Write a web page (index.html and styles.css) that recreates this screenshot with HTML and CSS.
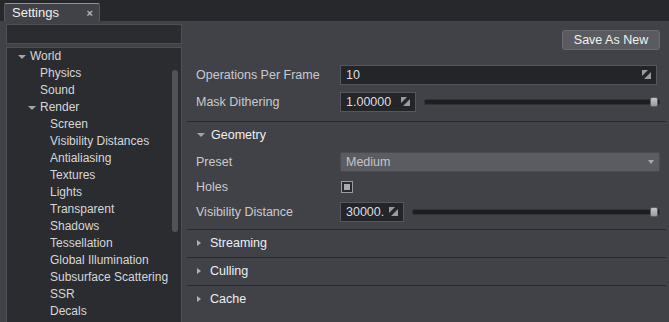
FILE: index.html
```html
<!DOCTYPE html>
<html lang="en">
<head>
    <meta charset="UTF-8">
    <title>Settings</title>
    <link rel="stylesheet" href="styles.css">
</head>
<body>

    <div class="tab-bar">
        <div class="tab">
            <span class="tab-title">Settings</span>
            <span class="tab-close">×</span>
        </div>
    </div>

    <div class="main">

        <!-- Arbol lateral -->
        <div class="side">
            <div class="search"></div>
            <div class="tree">
                <div class="node lvl0"><span class="arrow-down"></span>World</div>
                <div class="node lvl1">Physics</div>
                <div class="node lvl1">Sound</div>
                <div class="node lvl1b"><span class="arrow-down"></span>Render</div>
                <div class="node lvl2">Screen</div>
                <div class="node lvl2">Visibility Distances</div>
                <div class="node lvl2">Antialiasing</div>
                <div class="node lvl2">Textures</div>
                <div class="node lvl2">Lights</div>
                <div class="node lvl2">Transparent</div>
                <div class="node lvl2">Shadows</div>
                <div class="node lvl2">Tessellation</div>
                <div class="node lvl2">Global Illumination</div>
                <div class="node lvl2">Subsurface Scattering</div>
                <div class="node lvl2">SSR</div>
                <div class="node lvl2">Decals</div>
                <div class="scroll-thumb"></div>
            </div>
        </div>

        <!-- Panel de propiedades -->
        <div class="content">
            <div class="toolbar">
                <button class="btn">Save As New</button>
            </div>

            <div class="group">
                <div class="row tall">
                    <span class="label">Operations Per Frame</span>
                    <div class="field">
                        <div class="input wide"><span>10</span><svg class="resize" width="9" height="9" viewBox="0 0 9 9"><path d="M0 0H6L0 6Z M9 9H2L9 2Z" fill="#9a9b9f"/></svg></div>
                    </div>
                </div>
                <div class="row tall">
                    <span class="label">Mask Dithering</span>
                    <div class="field">
                        <div class="input num"><span>1.00000</span><svg class="resize" width="9" height="9" viewBox="0 0 9 9"><path d="M0 0H6L0 6Z M9 9H2L9 2Z" fill="#9a9b9f"/></svg></div>
                        <div class="slider"><div class="track"></div><div class="thumb"></div></div>
                    </div>
                </div>
            </div>

            <div class="section">
                <div class="section-head"><span class="arrow-down"></span>Geometry</div>
                <div class="section-body">
                    <div class="row">
                        <span class="label">Preset</span>
                        <div class="field">
                            <div class="select"><span>Medium</span><span class="select-arrow"></span></div>
                        </div>
                    </div>
                    <div class="row">
                        <span class="label">Holes</span>
                        <div class="field">
                            <div class="check"><div class="check-mark"></div></div>
                        </div>
                    </div>
                    <div class="row">
                        <span class="label">Visibility Distance</span>
                        <div class="field">
                            <div class="input num short"><span>30000.</span><svg class="resize" width="9" height="9" viewBox="0 0 9 9"><path d="M0 0H6L0 6Z M9 9H2L9 2Z" fill="#9a9b9f"/></svg></div>
                            <div class="slider"><div class="track"></div><div class="thumb"></div></div>
                        </div>
                    </div>
                </div>
            </div>

            <div class="section">
                <div class="section-head"><span class="arrow-right"></span>Streaming</div>
            </div>
            <div class="section">
                <div class="section-head"><span class="arrow-right"></span>Culling</div>
            </div>
            <div class="section">
                <div class="section-head"><span class="arrow-right"></span>Cache</div>
            </div>
        </div>

    </div>

</body>
</html>
```

FILE: styles.css
```css
body, html {
    margin: 0;
    padding: 0;
    height: 100%;
    overflow: hidden;
}
body {
    background-color: #414247;
    font-family: "Liberation Sans", Arial, sans-serif;
    font-size: 12px;
    color: #c9cacf;
}

/* Barra de pestanas */
.tab-bar {
    height: 21px;
    background-color: #27282b;
    display: flex;
    align-items: flex-end;
    padding-left: 4px;
}
.tab {
    width: 81px;
    height: 17px;
    background-color: #414247;
    border-top: 1px solid #6d9cc0;
    border-left: 1px solid #55575c;
    border-right: 1px solid #55575c;
    border-radius: 2px 2px 0 0;
    display: flex;
    align-items: center;
    justify-content: space-between;
    padding: 0 6px 0 7px;
    box-sizing: content-box;
}
.tab-title {
    color: #f0f0f0;
    font-size: 13px;
}
.tab-close {
    color: #b5b6ba;
    font-size: 11px;
    font-weight: bold;
}

.main {
    display: flex;
    height: 301px;
}

/* Lado izquierdo */
.side {
    width: 176px;
    padding: 3px 5px 0 6px;
    display: flex;
    flex-direction: column;
    gap: 3px;
    flex-shrink: 0;
}
.search {
    height: 18px;
    background-color: #2b2c2f;
    border: 1px solid #4e4f54;
}
.tree {
    flex: 1;
    background-color: #2b2c2f;
    border: 1px solid #4e4f54;
    border-bottom: none;
    position: relative;
    overflow: hidden;
}
.node {
    height: 17px;
    line-height: 17px;
    color: #d6d7da;
    white-space: nowrap;
    display: flex;
    align-items: center;
}
.lvl0 { padding-left: 11px; }
.lvl1 { padding-left: 33px; }
.lvl1b { padding-left: 21px; }
.lvl2 { padding-left: 43px; }
.arrow-down {
    width: 0;
    height: 0;
    border-left: 4px solid transparent;
    border-right: 4px solid transparent;
    border-top: 4px solid #a2a3a7;
    margin-right: 4px;
}
.scroll-thumb {
    position: absolute;
    left: 165px;
    top: 22px;
    width: 6px;
    height: 162px;
    border-radius: 3px;
    background-color: #515257;
}

/* Panel derecho */
.content {
    flex: 1;
    padding-right: 3px;
}
.toolbar {
    display: flex;
    justify-content: flex-end;
    padding: 9px 6px 0 0;
    height: 22px;
}
.btn {
    height: 20px;
    width: 98px;
    background-color: #5a5b60;
    border: 1px solid #6b6c71;
    border-radius: 3px;
    color: #f2f2f2;
    font-family: "Liberation Sans", Arial, sans-serif;
    font-size: 12.5px;
    padding: 0;
}
.group {
    padding: 9px 0 6px;
}
.row {
    height: 25px;
    display: flex;
    align-items: center;
    padding-left: 9px;
}
.row.tall {
    height: 27px;
}
.label {
    width: 144px;
    flex-shrink: 0;
    font-size: 12.5px;
    white-space: nowrap;
}
.field {
    flex: 1;
    display: flex;
    align-items: center;
    padding-right: 6px;
}
.input {
    height: 18px;
    background-color: #242528;
    border: 1px solid #56575c;
    display: flex;
    align-items: center;
    justify-content: space-between;
    padding: 0 5px 0 5px;
    color: #dcdde0;
    font-size: 12.5px;
}
.input.wide {
    flex: 1;
    margin-right: 3px;
}
.input.num {
    width: 64px;
    flex-shrink: 0;
}
.input.short {
    width: 52px;
}
.resize {
    display: block;
}
.slider {
    flex: 1;
    position: relative;
    height: 10px;
    margin-left: 8px;
    display: flex;
    align-items: center;
}
.track {
    flex: 1;
    height: 4px;
    background-color: #1d1e20;
    border: 1px solid #323337;
    border-radius: 2px;
}
.thumb {
    position: absolute;
    right: 2px;
    top: 0;
    width: 8px;
    height: 10px;
    border-radius: 2px;
    background: linear-gradient(#c4c5c8, #98999d);
    border: 1px solid #5e5f63;
    box-sizing: border-box;
}

.section-head {
    border-top: 1px solid #2a2b2e;
    display: flex;
    align-items: center;
    padding: 0 0 2px 10px;
    box-sizing: border-box;
    height: 28px;
    color: #eeeff1;
    font-size: 12.5px;
}
.section-head .arrow-down {
    margin-right: 6px;
}
.arrow-right {
    width: 0;
    height: 0;
    border-top: 3.5px solid transparent;
    border-bottom: 3.5px solid transparent;
    border-left: 4px solid #aeafb3;
    margin-right: 9px;
}
.section-body {
    padding-bottom: 5px;
}
.select {
    flex: 1;
    height: 18px;
    background-color: #5b5c61;
    border: 1px solid #4a4b50;
    border-radius: 2px;
    display: flex;
    align-items: center;
    justify-content: space-between;
    padding: 0 5px;
    color: #c4c5c9;
    font-size: 12.5px;
}
.select-arrow {
    width: 0;
    height: 0;
    border-left: 3.5px solid transparent;
    border-right: 3.5px solid transparent;
    border-top: 4px solid #a9aaae;
}
.check {
    width: 10px;
    height: 10px;
    border: 1px solid #9c9da1;
    background-color: #2a2b2e;
    display: flex;
    align-items: center;
    justify-content: center;
    margin-left: 1px;
}
.check-mark {
    width: 6px;
    height: 6px;
    background-color: #a9aaae;
}
```
